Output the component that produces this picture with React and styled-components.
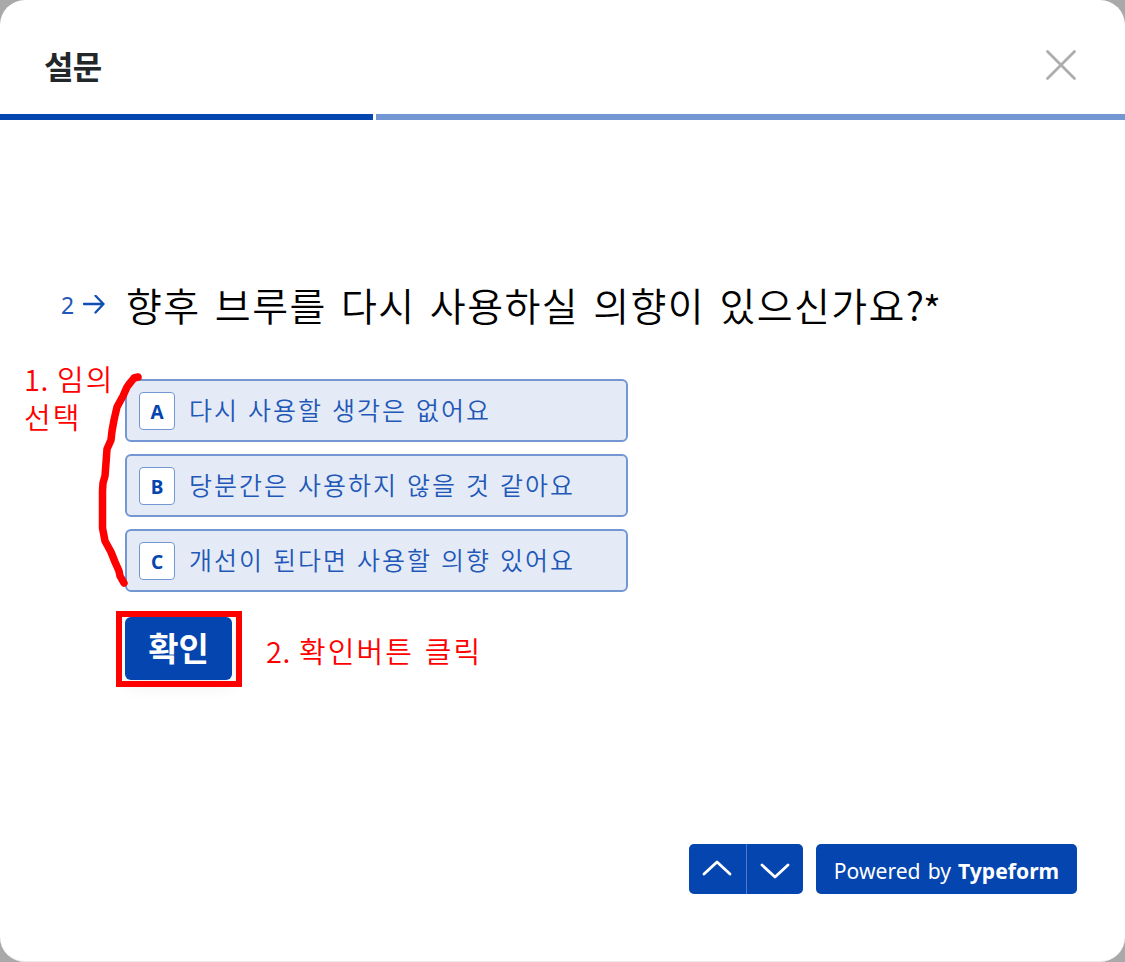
import React from "react";
import styled, { createGlobalStyle } from "styled-components";

const BLUE = "#0445af";
const SOFT_BLUE = "#7397d2";
const RED = "#ff0000";

const GlobalStyle = createGlobalStyle`
  * { box-sizing: border-box; }
  body {
    margin: 0;
    background: #a9a9a9;
    font-family: "Noto Sans CJK KR", "Noto Sans", sans-serif;
  }
  button { font: inherit; cursor: pointer; }
`;

const Modal = styled.main`
  position: relative;
  display: flex;
  flex-direction: column;
  width: 1125px;
  height: 962px;
  overflow: hidden;
  background: #fff;
  border-radius: 25px;
  border-bottom: 1px solid #ececec;
`;

const Header = styled.header`
  display: flex;
  align-items: center;
  justify-content: space-between;
  height: 114px;
  padding: 16px 48px 0 44px;
`;

const Title = styled.h1`
  margin: 0;
  font-size: 32px;
  line-height: 40px;
  padding-bottom: 1px;
  font-weight: 700;
  letter-spacing: -0.6px;
  color: #22272a;
`;

const CloseButton = styled.button`
  display: flex;
  padding: 0;
  border: 0;
  background: none;
`;

const Progress = styled.div`
  display: flex;
  gap: 3px;
  height: 6px;
`;

const Segment = styled.div`
  width: ${(p) => (p.$done ? "373px" : "auto")};
  flex: ${(p) => (p.$done ? "none" : 1)};
  background: ${(p) => (p.$done ? BLUE : SOFT_BLUE)};
`;

const Question = styled.section`
  display: grid;
  grid-template-columns: 65px 1fr;
  padding: 160px 0 0 61px;
`;

const QuestionNumber = styled.div`
  display: flex;
  align-items: center;
  gap: 8px;
  height: 50px;
  font-family: "Noto Sans", sans-serif;
  font-size: 23px;
  color: #1f58b8;
`;

const QuestionText = styled.h2`
  margin: 0;
  height: 50px;
  line-height: 48px;
  font-size: 39px;
  font-weight: 350;
  letter-spacing: 1.4px;
  word-spacing: 4.2px;
  color: #000;
  white-space: nowrap;
`;

const QuestionEnd = styled.span`
  letter-spacing: -1px;
`;

const Required = styled.span`
  display: inline-block;
  line-height: 1;
  transform: translateY(4px);
`;

const Answers = styled.div`
  grid-column: 2;
  display: flex;
  flex-direction: column;
  align-items: flex-start;
  gap: 12px;
  margin: 49px 0 0 -1px;
`;

const Option = styled.button`
  display: flex;
  align-items: center;
  gap: 14px;
  width: 503px;
  height: 63px;
  padding: 0 12px;
  border: 2px solid ${SOFT_BLUE};
  border-radius: 6px;
  background: #e5ebf6;
`;

const KeyBadge = styled.span`
  display: flex;
  align-items: center;
  justify-content: center;
  width: 36px;
  height: 38px;
  border: 1.5px solid ${SOFT_BLUE};
  border-radius: 4px;
  background: #fff;
  font-family: "Noto Sans", sans-serif;
  font-size: 19px;
  line-height: 36px;
  padding-top: 2px;
  font-weight: 700;
  color: ${BLUE};
`;

const OptionText = styled.span`
  font-size: 25px;
  line-height: 36px;
  padding-bottom: 4px;
  font-weight: 350;
  letter-spacing: 2px;
  word-spacing: 1.4px;
  color: #1f58b8;
  white-space: nowrap;
`;

const SubmitButton = styled.button`
  width: 107px;
  height: 63px;
  margin-top: 13px;
  padding: 0 0 3px;
  border: 0;
  border-radius: 6px;
  background: ${BLUE};
  box-shadow: 0 7px 18px rgba(0, 0, 0, 0.06);
  color: #fff;
  font-size: 33px;
  line-height: 60px;
  font-weight: 700;
`;

const Footer = styled.footer`
  display: flex;
  justify-content: flex-end;
  gap: 13px;
  height: 50px;
  margin: auto 48px 67px 0;
`;

const Navigation = styled.nav`
  display: flex;
  width: 114px;
  overflow: hidden;
  border-radius: 5px;
`;

const NavButton = styled.button`
  display: flex;
  flex: 1;
  align-items: center;
  justify-content: center;
  padding: 0;
  border: 0;
  border-left: ${(p) => (p.$divided ? "1px solid #5079c5" : "0")};
  background: ${BLUE};
`;

const Branding = styled.button`
  width: 261px;
  padding: 3px 0 0;
  border: 0;
  border-radius: 5px;
  background: ${BLUE};
  color: #fff;
  font-family: "Noto Sans", sans-serif;
  font-size: 21.1px;
  line-height: 47px;
  word-spacing: 1.6px;
  white-space: nowrap;
`;

const Note = styled.p`
  position: absolute;
  left: ${(p) => p.$x}px;
  top: ${(p) => p.$y}px;
  margin: 0;
  font-size: 29px;
  line-height: 38px;
  letter-spacing: 2.1px;
  word-spacing: 2px;
  font-weight: 350;
  color: ${RED};
  white-space: nowrap;
`;

const NoteNumber = styled.span`
  letter-spacing: 0.6px;
  word-spacing: 1px;
`;

const Highlight = styled.div`
  position: absolute;
  left: 116px;
  top: 611px;
  width: 126px;
  height: 76px;
  border: 6px solid ${RED};
`;

const Bracket = styled.svg`
  position: absolute;
  left: 90px;
  top: 365px;
`;

const OPTIONS = [
  ["A", "다시 사용할 생각은 없어요"],
  ["B", "당분간은 사용하지 않을 것 같아요"],
  ["C", "개선이 된다면 사용할 의향 있어요"],
];

const Chevron = ({ d }) => (
  <svg width="32" height="20" viewBox="0 0 32 20" fill="none" stroke="#fff" strokeWidth="2.8" strokeLinecap="round" strokeLinejoin="round">
    <path d={d} />
  </svg>
);

export default function App() {
  return (
    <>
      <GlobalStyle />
      <Modal>
        <Header>
          <Title>설문</Title>
          <CloseButton aria-label="닫기">
            <svg width="32" height="32" viewBox="0 0 32 32" stroke="#adadad" strokeWidth="2.8" strokeLinecap="round">
              <path d="M2.500 2.500L29.500 29.500M29.500 2.500L2.500 29.500" />
            </svg>
          </CloseButton>
        </Header>
        <Progress>
          <Segment $done />
          <Segment />
        </Progress>
        <Question>
          <QuestionNumber>
            <span>2</span>
            <svg width="23" height="20" viewBox="0 0 23 20" fill="none" stroke="#0f4db3" strokeWidth="2.3" strokeLinecap="round" strokeLinejoin="round">
              <path d="M2 9H21.500M13.500 0.800L21.500 9L13.500 17.500" />
            </svg>
          </QuestionNumber>
          <QuestionText>
            향후 브루를 다시 사용하실 의향이 있으신가요<QuestionEnd>?<Required>*</Required></QuestionEnd>
          </QuestionText>
          <Answers>
            {OPTIONS.map(([key, label]) => (
              <Option key={key}>
                <KeyBadge>{key}</KeyBadge>
                <OptionText>{label}</OptionText>
              </Option>
            ))}
            <SubmitButton>확인</SubmitButton>
          </Answers>
        </Question>
        <Footer>
          <Navigation>
            <NavButton aria-label="이전">
              <Chevron d="M3 15L16 3L29 15" />
            </NavButton>
            <NavButton $divided aria-label="다음">
              <Chevron d="M3 6L16 18L29 6" />
            </NavButton>
          </Navigation>
          <Branding>
            Powered by <b>Typeform</b>
          </Branding>
        </Footer>
        <Note $x={24} $y={359}>
          <NoteNumber>1. </NoteNumber>임의
          <br />
          선택
        </Note>
        <Note $x={266} $y={631}>
          <NoteNumber>2. </NoteNumber>확인버튼 클릭
        </Note>
        <Highlight />
        <Bracket width="60" height="230" viewBox="90 365 60 230" fill="none" stroke={RED} strokeWidth="7.500" strokeLinecap="round" strokeLinejoin="round">
          <path d="M138 377L134 378L127 387L123 396L117 407L114 420L112 431L111 440L107 449L106 463L105 476L103 483L102.500 491V528L105 541L111 552L115 562L119 571L120 576L124 583" />
        </Bracket>
      </Modal>
    </>
  );
}
